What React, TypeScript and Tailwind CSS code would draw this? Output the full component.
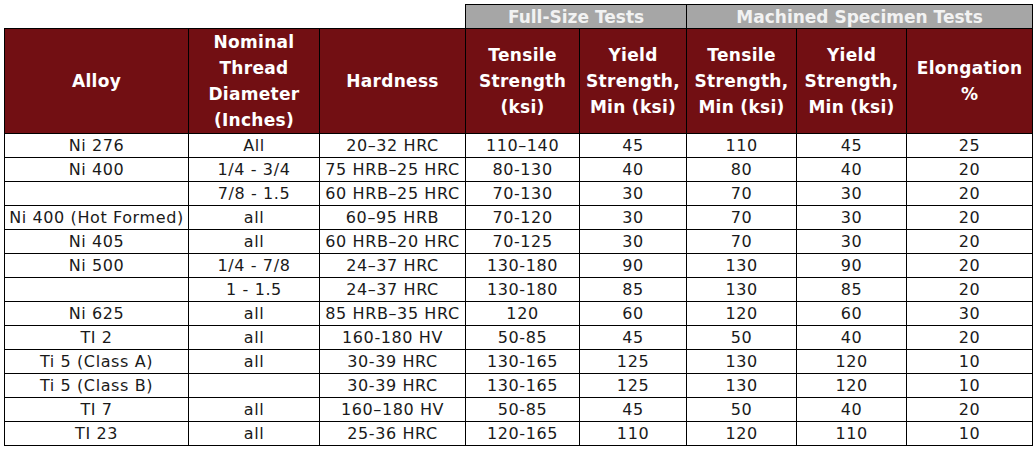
const rows = [
  ['Ni 276', 'All', '20–32 HRC', '110–140', '45', '110', '45', '25'],
  ['Ni 400', '1/4 - 3/4', '75 HRB–25 HRC', '80-130', '40', '80', '40', '20'],
  ['', '7/8 - 1.5', '60 HRB–25 HRC', '70-130', '30', '70', '30', '20'],
  ['Ni 400 (Hot Formed)', 'all', '60–95 HRB', '70-120', '30', '70', '30', '20'],
  ['Ni 405', 'all', '60 HRB–20 HRC', '70-125', '30', '70', '30', '20'],
  ['Ni 500', '1/4 - 7/8', '24–37 HRC', '130-180', '90', '130', '90', '20'],
  ['', '1 - 1.5', '24–37 HRC', '130-180', '85', '130', '85', '20'],
  ['Ni 625', 'all', '85 HRB–35 HRC', '120', '60', '120', '60', '30'],
  ['TI 2', 'all', '160-180 HV', '50-85', '45', '50', '40', '20'],
  ['Ti 5 (Class A)', 'all', '30-39 HRC', '130-165', '125', '130', '120', '10'],
  ['Ti 5 (Class B)', '', '30-39 HRC', '130-165', '125', '130', '120', '10'],
  ['TI 7', 'all', '160–180 HV', '50-85', '45', '50', '40', '20'],
  ['TI 23', 'all', '25-36 HRC', '120-165', '110', '120', '110', '10'],
]

const widths = ['w-[184px]', 'w-[131px]', 'w-[146px]', 'w-[114px]', 'w-[107px]', 'w-[110px]', 'w-[110px]', 'w-[126px]']

const headers = [
  ['Alloy'],
  ['Nominal', 'Thread', 'Diameter', '(Inches)'],
  ['Hardness'],
  ['Tensile', 'Strength', '(ksi)'],
  ['Yield', 'Strength,', 'Min (ksi)'],
  ['Tensile', 'Strength,', 'Min (ksi)'],
  ['Yield', 'Strength,', 'Min (ksi)'],
  ['Elongation', '%'],
]

export default function App() {
  return (
    <div className="bg-white w-[1036px] h-[450px] pt-[4px] pl-[4px] font-['DejaVu_Sans',sans-serif]">
      <table className="table-fixed border-collapse w-[1028px]">
        <colgroup>
          {widths.map((w, i) => (
            <col key={i} className={w} />
          ))}
        </colgroup>
        <thead>
          {/* group header */}
          <tr className="h-[24px]">
            <th colSpan={3} className="p-0"></th>
            <th colSpan={2} className="p-0 border border-black bg-[#a6a6a6] text-[#f2f2f2] text-[17px] font-bold leading-[22px]">
              Full-Size Tests
            </th>
            <th colSpan={3} className="p-0 border border-black bg-[#a6a6a6] text-[#f2f2f2] text-[17px] font-bold leading-[22px]">
              Machined Specimen Tests
            </th>
          </tr>
          <tr className="h-[104px]">
            {headers.map((lines, i) => (
              <th
                key={i}
                className="p-0 border border-black bg-[#720f13] text-white text-[17px] font-bold leading-[26px] tracking-[0.3px] align-middle"
              >
                {lines.map((l, j) => (
                  <div key={j}>{l}</div>
                ))}
              </th>
            ))}
          </tr>
        </thead>
        <tbody>
          {rows.map((r, i) => (
            <tr key={i} className="h-[24px]">
              {r.map((c, j) => (
                <td key={j} className="p-0 border border-black text-center text-[16px] tracking-[0.6px] leading-[22px] text-[#1a1a1a] whitespace-nowrap">
                  {c}
                </td>
              ))}
            </tr>
          ))}
        </tbody>
      </table>
    </div>
  )
}
